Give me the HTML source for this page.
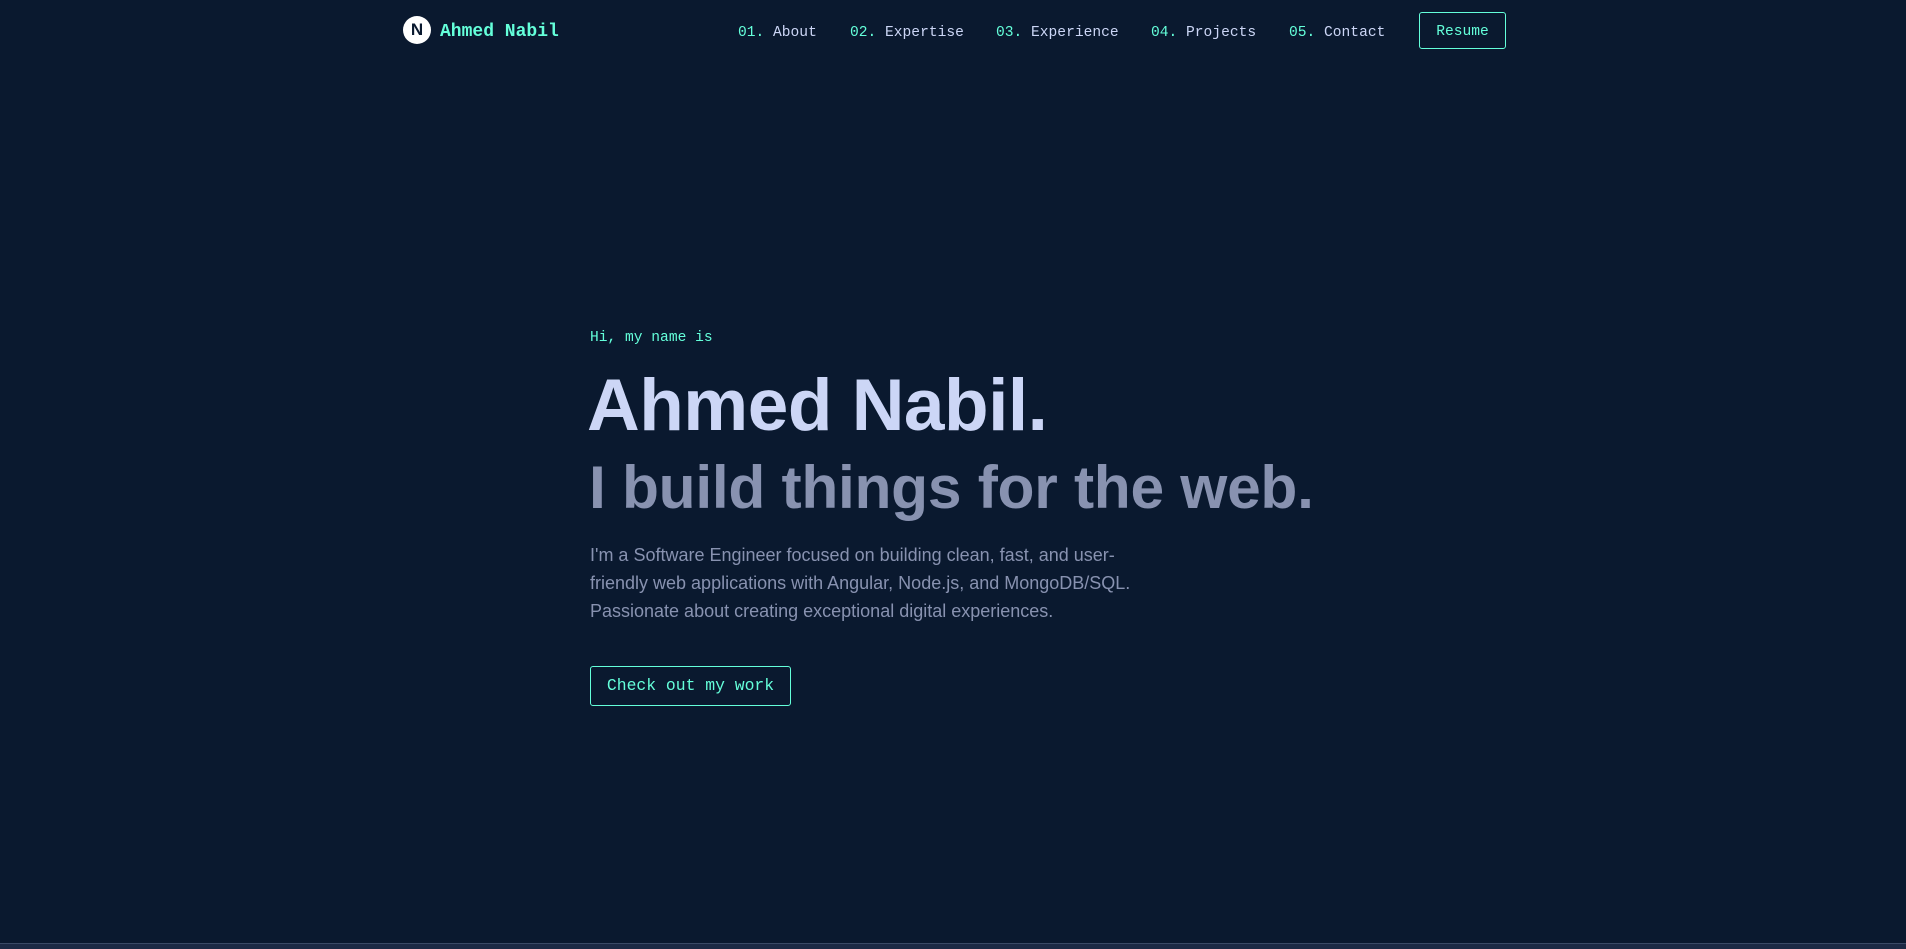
<!DOCTYPE html>
<html><head><meta charset="utf-8"><style>
*{margin:0;padding:0;box-sizing:border-box}
html,body{width:1906px;height:949px;overflow:hidden;background:#0a192f}
body{position:relative;font-family:"Liberation Sans",Arial,sans-serif}
.mono{font-family:"Liberation Mono",monospace}
.abs{position:absolute;white-space:nowrap}
.logo{left:403px;top:16px;width:28px;height:28px;border-radius:50%;background:#fff;color:#0a192f;font-weight:bold;font-size:17px;text-align:center;line-height:28px}
.name{left:440px;top:22px;color:#64ffda;font-size:18px;font-weight:bold}
.nav{top:25px;font-size:14.6px;color:#ccd6f6}
.nav span{color:#64ffda}
.resume{left:1419px;top:12px;width:87px;height:37px;border:1px solid #64ffda;border-radius:3px;color:#64ffda;font-size:14.6px;text-align:center;line-height:38px}
.hi{left:590px;top:330px;color:#64ffda;font-size:14.6px}
.h1{left:587px;top:364px;color:#ccd6f6;font-size:73px;font-weight:bold;letter-spacing:-0.5px}
.h2{left:589px;top:452px;color:#8892b0;font-size:60.5px;font-weight:bold;letter-spacing:-0.3px}
.p{left:590px;top:541px;color:#8892b0;font-size:18px;line-height:28px;white-space:normal;width:560px}
.btn{left:590px;top:666px;width:201px;height:40px;border:1px solid #64ffda;border-radius:3px;color:#64ffda;font-size:16.4px;text-align:center;line-height:38px}
.bar{left:0;top:943px;width:1906px;height:6px;background:#1c2a45;border-top:1px solid #3a4a66}
</style></head><body>
<div class="abs logo">N</div>
<div class="abs name mono">Ahmed Nabil</div>
<div class="abs nav mono" style="left:738px"><span>01.</span> About</div>
<div class="abs nav mono" style="left:850px"><span>02.</span> Expertise</div>
<div class="abs nav mono" style="left:996px"><span>03.</span> Experience</div>
<div class="abs nav mono" style="left:1151px"><span>04.</span> Projects</div>
<div class="abs nav mono" style="left:1289px"><span>05.</span> Contact</div>
<div class="abs resume mono">Resume</div>
<div class="abs hi mono">Hi, my name is</div>
<div class="abs h1">Ahmed Nabil.</div>
<div class="abs h2">I build things for the web.</div>
<div class="abs p">I'm a Software Engineer focused on building clean, fast, and user-friendly web applications with Angular, Node.js, and MongoDB/SQL. Passionate about creating exceptional digital experiences.</div>
<div class="abs btn mono">Check out my work</div>
<div class="abs bar"></div>
</body></html>
